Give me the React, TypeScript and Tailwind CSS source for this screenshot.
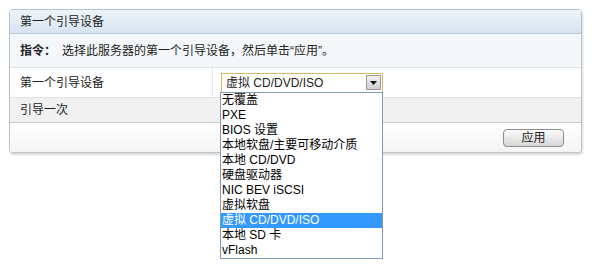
import React from "react";

const font = { fontFamily: '"Liberation Sans", Arial, "Noto Sans CJK SC", sans-serif' };

const options = [
  "无覆盖",
  "PXE",
  "BIOS 设置",
  "本地软盘/主要可移动介质",
  "本地 CD/DVD",
  "硬盘驱动器",
  "NIC BEV iSCSI",
  "虚拟软盘",
  "虚拟 CD/DVD/ISO",
  "本地 SD 卡",
  "vFlash",
];

export default function App() {
  return (
    <div className="relative w-[592px] h-[273px] bg-white text-[12px] text-[#222]" style={font}>
      <div className="pt-[9px] pl-[9px]">
        <div className="w-[573px] border border-[#b9c3cc] rounded-[4px] overflow-hidden shadow-[1px_2px_2px_rgba(0,0,0,0.15)] bg-white">
          <div className="h-[24px] flex items-center pl-[10px] bg-gradient-to-b from-[#eef4fa] to-[#d6e4f1] border-b border-[#b9c7d4] text-[#222]">
            第一个引导设备
          </div>
          <div className="h-[34px] flex items-center pl-[10px] bg-[#f5f8fb] border-b border-[#dde3ea]">
            <span className="font-bold">指令：</span>
            <span className="ml-[6px]">选择此服务器的第一个引导设备，然后单击“应用”。</span>
          </div>
          <div className="h-[29px] flex bg-white">
            <div className="w-[203px] flex items-center pl-[10px] border-r border-[#e4e8ec]">第一个引导设备</div>
            <div className="flex items-center pl-[8px]">
              <div className="w-[162px] h-[20px] border border-[#d9b968] bg-white flex items-center justify-between">
                <span className="pl-[4px] text-[12px] leading-none">虚拟 CD/DVD/ISO</span>
                <div className="w-[15px] h-[15px] mr-[1px] border border-[#9a9a9a] bg-gradient-to-b from-[#f2f2f2] to-[#cfcfcf] flex items-center justify-center">
                  <svg width="7" height="4" viewBox="0 0 7 4"><polygon points="0,0 7,0 3.5,4" fill="#111" /></svg>
                </div>
              </div>
            </div>
          </div>
          <div className="h-[26px] flex items-center pl-[10px] bg-[#f1f1f1] border-t border-[#e2e2e2] border-b border-b-[#c9c9c9]">
            引导一次
          </div>
          <div className="h-[29px] flex items-center justify-end pr-[17px] bg-gradient-to-b from-white to-[#f4f4f4]">
            <button className="w-[61px] h-[18px] rounded-[4px] border border-[#8d8d8d] bg-gradient-to-b from-[#fbfbfb] to-[#d7d7d7] text-[12px] leading-none text-[#222] flex items-center justify-center">
              应用
            </button>
          </div>
        </div>
      </div>
      <div className="absolute left-[220px] top-[92px] w-[163px] border border-[#7f9db9] bg-white">
        {options.map((o) => (
          <div
            key={o}
            className={
              o === "虚拟 CD/DVD/ISO"
                ? "h-[15px] leading-[15px] pl-[1px] bg-[#3399ff] text-white whitespace-nowrap"
                : "h-[15px] leading-[15px] pl-[1px] text-black whitespace-nowrap"
            }
          >
            {o}
          </div>
        ))}
      </div>
    </div>
  );
}
